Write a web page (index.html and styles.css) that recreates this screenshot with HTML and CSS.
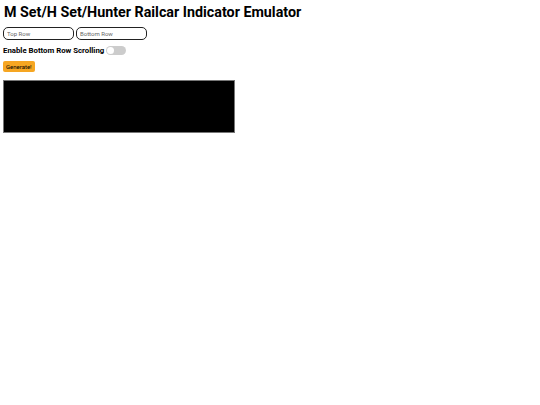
FILE: index.html
```html
<!DOCTYPE html>
<html>
<head>
<meta charset="utf-8">
<link rel="stylesheet" href="styles.css">
</head>
<body>
<h1 class="title">M Set/H Set/Hunter Railcar Indicator Emulator</h1>
<div class="inputs">
  <input class="field" type="text" placeholder="Top Row">
  <input class="field" type="text" placeholder="Bottom Row">
</div>
<div class="toggle-row">
  <span class="toggle-label">Enable Bottom Row Scrolling</span>
  <span class="switch"><span class="knob"></span></span>
</div>
<button class="generate">Generate!</button>
<div class="display"></div>
</body>
</html>
```
FILE: styles.css
```css
html, body {
  margin: 0;
  padding: 0;
  background: #fff;
}
body {
  padding: 4px 3px;
  font-family: Roboto, "Liberation Sans", sans-serif;
  color: #000;
}
.title {
  margin: 0 0 0 1px;
  font-size: 14.3px;
  font-weight: 700;
  line-height: 16px;
}
.inputs {
  display: flex;
  gap: 2px;
  margin-top: 7px;
}
.field {
  box-sizing: border-box;
  width: 71px;
  height: 13px;
  border: 1.5px solid #222;
  border-radius: 5px;
  padding: 0 0 0 3px;
  font-family: inherit;
  font-size: 6px;
  outline: none;
  background: #fff;
}
.field::placeholder {
  color: #666;
}
.toggle-row {
  display: flex;
  align-items: center;
  gap: 2px;
  margin-top: 6px;
}
.toggle-label {
  font-size: 7.8px;
  font-weight: 700;
}
.switch {
  position: relative;
  display: inline-block;
  width: 20px;
  height: 9px;
  border-radius: 5px;
  background: #ccc;
}
.knob {
  position: absolute;
  left: 1px;
  top: 1px;
  width: 7px;
  height: 7px;
  border-radius: 50%;
  background: #fff;
}
.generate {
  display: block;
  margin-top: 6px;
  height: 11px;
  padding: 0 3px;
  border: none;
  border-radius: 2px;
  background: #f6a622;
  font-family: inherit;
  font-size: 6px;
  color: #000;
}
.display {
  margin-top: 8px;
  width: 230px;
  height: 51px;
  background: #000;
  border: 1px solid #777;
}
```
